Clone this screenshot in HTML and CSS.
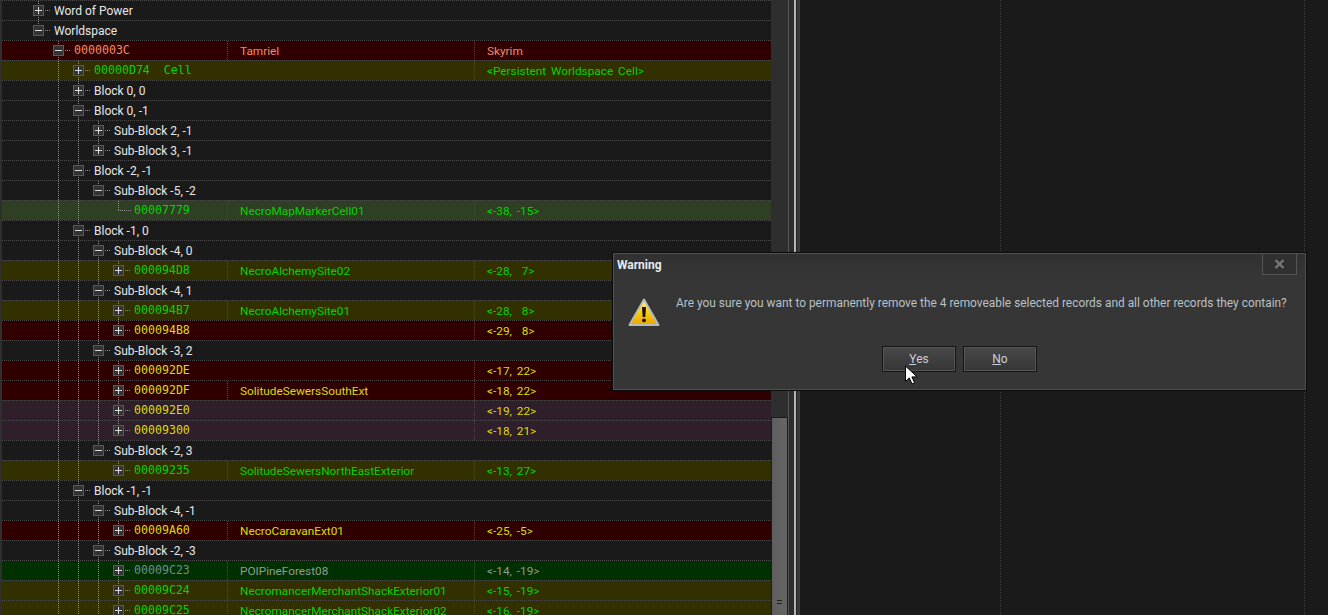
FILE: index.html
```html
<!DOCTYPE html>
<html lang="en">
<head>
  <meta charset="UTF-8">
  <title>Warning</title>
  <link rel="stylesheet" href="styles.css">
</head>
<body>
  <div class="tree">
    <div class="row"><div class="c1"><i class="g box"><b class="plus"></b></i>Word of Power</div></div>
    <div class="row"><div class="c1"><i class="g box end"><b class="minus"></b></i>Worldspace</div></div>

    <div class="row red salmon"><div class="c1"><i class="g off"></i><i class="g box"><b class="minus"></b></i><span class="id">0000003C</span></div><div class="c2">Tamriel</div><div class="c3">Skyrim</div></div>
    <div class="row olive green"><div class="c1 wide"><i class="g off"></i><i class="g"></i><i class="g box"><b class="plus"></b></i><span class="id">00000D74  Cell</span></div><div class="c3">&lt;Persistent Worldspace Cell&gt;</div></div>
    <div class="row"><div class="c1"><i class="g off"></i><i class="g"></i><i class="g box"><b class="plus"></b></i>Block 0, 0</div></div>
    <div class="row"><div class="c1"><i class="g off"></i><i class="g"></i><i class="g box"><b class="minus"></b></i>Block 0, -1</div></div>
    <div class="row"><div class="c1"><i class="g off"></i><i class="g"></i><i class="g"></i><i class="g box"><b class="plus"></b></i>Sub-Block 2, -1</div></div>
    <div class="row"><div class="c1"><i class="g off"></i><i class="g"></i><i class="g"></i><i class="g box end"><b class="plus"></b></i>Sub-Block 3, -1</div></div>
    <div class="row"><div class="c1"><i class="g off"></i><i class="g"></i><i class="g box"><b class="minus"></b></i>Block -2, -1</div></div>
    <div class="row"><div class="c1"><i class="g off"></i><i class="g"></i><i class="g"></i><i class="g box end"><b class="minus"></b></i>Sub-Block -5, -2</div></div>
    <div class="row sage green"><div class="c1"><i class="g off"></i><i class="g"></i><i class="g"></i><i class="g off"></i><i class="g leaf end"></i><span class="id">00007779</span></div><div class="c2">NecroMapMarkerCell01</div><div class="c3">&lt;-38, -15&gt;</div></div>
    <div class="row"><div class="c1"><i class="g off"></i><i class="g"></i><i class="g box"><b class="minus"></b></i>Block -1, 0</div></div>

    <div class="row"><div class="c1"><i class="g off"></i><i class="g"></i><i class="g"></i><i class="g box"><b class="minus"></b></i>Sub-Block -4, 0</div></div>
    <div class="row olive green"><div class="c1"><i class="g off"></i><i class="g"></i><i class="g"></i><i class="g"></i><i class="g box end"><b class="plus"></b></i><span class="id">000094D8</span></div><div class="c2">NecroAlchemySite02</div><div class="c3">&lt;-28,  7&gt;</div></div>
    <div class="row"><div class="c1"><i class="g off"></i><i class="g"></i><i class="g"></i><i class="g box"><b class="minus"></b></i>Sub-Block -4, 1</div></div>
    <div class="row olive green"><div class="c1"><i class="g off"></i><i class="g"></i><i class="g"></i><i class="g"></i><i class="g box"><b class="plus"></b></i><span class="id">000094B7</span></div><div class="c2">NecroAlchemySite01</div><div class="c3">&lt;-28,  8&gt;</div></div>
    <div class="row red yellow"><div class="c1 wide"><i class="g off"></i><i class="g"></i><i class="g"></i><i class="g"></i><i class="g box end"><b class="plus"></b></i><span class="id">000094B8</span></div><div class="c3">&lt;-29,  8&gt;</div></div>
    <div class="row"><div class="c1"><i class="g off"></i><i class="g"></i><i class="g"></i><i class="g box"><b class="minus"></b></i>Sub-Block -3, 2</div></div>
    <div class="row red yellow"><div class="c1 wide"><i class="g off"></i><i class="g"></i><i class="g"></i><i class="g"></i><i class="g box"><b class="plus"></b></i><span class="id">000092DE</span></div><div class="c3">&lt;-17, 22&gt;</div></div>
    <div class="row red yellow"><div class="c1"><i class="g off"></i><i class="g"></i><i class="g"></i><i class="g"></i><i class="g box"><b class="plus"></b></i><span class="id">000092DF</span></div><div class="c2">SolitudeSewersSouthExt</div><div class="c3">&lt;-18, 22&gt;</div></div>
    <div class="row plum yellow"><div class="c1 wide"><i class="g off"></i><i class="g"></i><i class="g"></i><i class="g"></i><i class="g box"><b class="plus"></b></i><span class="id">000092E0</span></div><div class="c3">&lt;-19, 22&gt;</div></div>
    <div class="row plum yellow"><div class="c1 wide"><i class="g off"></i><i class="g"></i><i class="g"></i><i class="g"></i><i class="g box end"><b class="plus"></b></i><span class="id">00009300</span></div><div class="c3">&lt;-18, 21&gt;</div></div>
    <div class="row"><div class="c1"><i class="g off"></i><i class="g"></i><i class="g"></i><i class="g box end"><b class="minus"></b></i>Sub-Block -2, 3</div></div>
    <div class="row olive green"><div class="c1"><i class="g off"></i><i class="g"></i><i class="g"></i><i class="g off"></i><i class="g box end"><b class="plus"></b></i><span class="id">00009235</span></div><div class="c2">SolitudeSewersNorthEastExterior</div><div class="c3">&lt;-13, 27&gt;</div></div>

    <div class="row"><div class="c1"><i class="g off"></i><i class="g"></i><i class="g box"><b class="minus"></b></i>Block -1, -1</div></div>
    <div class="row"><div class="c1"><i class="g off"></i><i class="g"></i><i class="g"></i><i class="g box"><b class="minus"></b></i>Sub-Block -4, -1</div></div>
    <div class="row red yellow"><div class="c1"><i class="g off"></i><i class="g"></i><i class="g"></i><i class="g"></i><i class="g box end"><b class="plus"></b></i><span class="id">00009A60</span></div><div class="c2">NecroCaravanExt01</div><div class="c3">&lt;-25, -5&gt;</div></div>
    <div class="row"><div class="c1"><i class="g off"></i><i class="g"></i><i class="g"></i><i class="g box"><b class="minus"></b></i>Sub-Block -2, -3</div></div>
    <div class="row forest grey"><div class="c1"><i class="g off"></i><i class="g"></i><i class="g"></i><i class="g"></i><i class="g box"><b class="plus"></b></i><span class="id">00009C23</span></div><div class="c2">POIPineForest08</div><div class="c3">&lt;-14, -19&gt;</div></div>
    <div class="row olive green"><div class="c1"><i class="g off"></i><i class="g"></i><i class="g"></i><i class="g"></i><i class="g box"><b class="plus"></b></i><span class="id">00009C24</span></div><div class="c2">NecromancerMerchantShackExterior01</div><div class="c3">&lt;-15, -19&gt;</div></div>
    <div class="row olive green"><div class="c1"><i class="g off"></i><i class="g"></i><i class="g"></i><i class="g"></i><i class="g box"><b class="plus"></b></i><span class="id">00009C25</span></div><div class="c2">NecromancerMerchantShackExterior02</div><div class="c3">&lt;-16, -19&gt;</div></div>
  </div>

  <div class="scrollbar">
    <div class="thumb"><span class="grip"></span></div>
  </div>
  <div class="splitter"></div>

  <div class="side">
    <div class="side-col first"></div>
    <div class="side-col second"></div>
  </div>

  <!-- modal on top of everything -->
  <div class="dialog">
    <div class="dialog-title">
      <span>Warning</span>
      <button class="close" aria-label="Close">
        <svg width="11" height="10" viewBox="0 0 11 10"><path d="M1.5 1l8 8M9.5 1l-8 8" stroke="#777" stroke-width="2.4" fill="none"/></svg>
      </button>
    </div>
    <div class="dialog-body">
      <svg class="warn-icon" width="32" height="29" viewBox="0 0 32 29">
        <defs>
          <linearGradient id="warnFill" x1="0" y1="0" x2="0" y2="1">
            <stop offset="0" stop-color="#fff3a0"/>
            <stop offset="0.45" stop-color="#fbd20c"/>
            <stop offset="1" stop-color="#e9a400"/>
          </linearGradient>
        </defs>
        <path d="M16 1.5L30.5 27H1.5z" fill="url(#warnFill)" stroke="#b9b9b9" stroke-width="2" stroke-linejoin="round"/>
        <path d="M14 9h4l-.7 10h-2.6z" fill="#111"/>
        <circle cx="16" cy="22.3" r="1.9" fill="#111"/>
      </svg>
      <p class="message">Are you sure you want to permanently remove the 4 removeable selected records and all other records they contain?</p>
    </div>
    <div class="dialog-buttons">
      <button class="btn"><u>Y</u>es</button>
      <button class="btn"><u>N</u>o</button>
    </div>
  </div>

  <svg class="cursor" width="15" height="20" viewBox="0 0 15 20">
    <path d="M1.5 1v15.5l3.8-3.6 2.7 6 2.6-1.2-2.7-5.8h5.2z" fill="#fff" stroke="#000" stroke-width="1"/>
  </svg>
</body>
</html>
```

FILE: styles.css
```css
* {
  box-sizing: border-box;
}
body {
  margin: 0;
  height: 100vh;
  overflow: hidden;
  display: flex;
  background-color: #1a1a1a;
  color: #e6e6e6;
  font-family: Roboto, sans-serif;
  font-size: 12px;
}

/* tree */
.tree {
  width: 771px;
  flex: none;
  border-left: 2px solid #2f2f2f;
}
.row {
  display: flex;
  height: 20px;
  border-top: 1px dotted #4a4a4a;
  line-height: 21px;
  white-space: pre;
}
.c1 {
  display: flex;
  flex: 1;
  padding-left: 31px;
}
.c1:not(:last-child) {
  flex: none;
  width: 225px;
}
.c1.wide:not(:last-child) {
  width: 472px;
}
.c2 {
  flex: none;
  width: 247px;
  padding-left: 12px;
  border-left: 1px dotted #4a4a4a;
  font-size: 11.8px;
}
.c3 {
  flex: 1;
  padding-left: 12px;
  border-left: 1px dotted #4a4a4a;
  font-size: 11.8px;
  word-spacing: 2px;
}
.id {
  font-family: 'DejaVu Sans Mono', monospace;
  font-size: 11.6px;
  line-height: 19px;
}

/* row colours */
.red { background-color: #300000; }
.olive { background-color: #333000; }
.sage { background-color: #2f3f23; }
.plum { background-color: #2f1f2a; }
.forest { background-color: #003000; }
.salmon { color: #f58a62; }
.green { color: #00d400; }
.yellow { color: #dcdc00; }
.grey { color: #8d9c92; }
.forest .id { color: #6b8f8f; }

/* tree guides, one cell per level */
.g {
  --dots: repeating-linear-gradient(to bottom, #8e8e8e 0 1px, transparent 1px 2px);
  --dash: repeating-linear-gradient(to right, #8e8e8e 0 1px, transparent 1px 2px);
  --len: 100%;
  flex: none;
  width: 20px;
  display: flex;
  align-items: center;
  background: var(--dots) 5px 0 / 1px var(--len) no-repeat;
}
.g.end {
  --len: 50%;
}
.g.off {
  background: none;
}
.g.box {
  width: 21px;
  background: var(--dash) 12px 50% / 6px 1px no-repeat, var(--dots) 5px 0 / 1px var(--len) no-repeat;
}
.g.leaf {
  width: 21px;
  background: var(--dash) 5px 50% / 14px 1px no-repeat, var(--dots) 5px 0 / 1px var(--len) no-repeat;
}
.plus, .minus {
  width: 11px;
  height: 11px;
  border: 1px solid #5a5a5a;
  background-color: #333;
}
.minus {
  background: linear-gradient(#ddd, #ddd) center / 7px 1px no-repeat, #333;
}
.plus {
  background: linear-gradient(#ddd, #ddd) center / 7px 1px no-repeat, linear-gradient(#ddd, #ddd) center / 1px 7px no-repeat, #333;
}

/* scrollbar and splitter */
.scrollbar {
  width: 17px;
  flex: none;
  padding-top: 417px;
  background-color: #2e2e2e;
}
.thumb {
  height: 220px;
  padding-top: 182px;
  display: flex;
  justify-content: center;
  border: 1px solid #1c1c1c;
  background: linear-gradient(to right, #5e5e5e, #666);
}
.grip {
  width: 5px;
  height: 4px;
  border-top: 1px solid #222;
  border-bottom: 1px solid #222;
}
.splitter {
  width: 12px;
  flex: none;
  background: linear-gradient(to right, #555 0 1px, #2d2d2d 1px 6px, #b5b5b5 6px 8px, #222 8px 9px, #3a3a3a 9px);
}

/* right pane */
.side {
  flex: 1;
  display: flex;
}
.side-col {
  border-right: 1px dotted #3c3c3c;
}
.first {
  width: 201px;
}
.second {
  width: 304px;
}

/* dialog */
.dialog {
  position: absolute;
  left: 612px;
  top: 252px;
  width: 695px;
  height: 139px;
  border: 1px solid #0c0c0c;
  outline: 1px solid #505050;
  outline-offset: -2px;
  background: linear-gradient(#303030, #363636 24px);
  padding: 1px 1px;
}
.dialog-title {
  display: flex;
  justify-content: space-between;
  padding-left: 3px;
  height: 21px;
  line-height: 22px;
  font-weight: 700;
  color: #e4ebf2;
}
.close {
  width: 35px;
  height: 21px;
  margin-right: 8px;
  padding: 0;
  display: flex;
  align-items: center;
  justify-content: center;
  border: 1px solid #555;
  border-top: none;
  background: #303030;
}
.dialog-body {
  display: flex;
  align-items: flex-start;
  padding: 20px 0 0 14px;
}
.warn-icon {
  flex: none;
  margin-top: 3px;
}
.message {
  margin: 0 0 0 16px;
  color: #b9c0c6;
  white-space: nowrap;
  line-height: 16px;
  font-size: 11.92px;
}
.dialog-buttons {
  display: flex;
  justify-content: center;
  gap: 7px;
  margin-top: 19px;
}
.btn {
  width: 74px;
  height: 26px;
  padding: 0;
  border: 1px solid #151515;
  box-shadow: inset 0 0 0 1px #555;
  background: linear-gradient(#484848, #363636);
  color: #c9ced3;
  font-family: Roboto, sans-serif;
  font-size: 12px;
}

.cursor {
  position: absolute;
  left: 904px;
  top: 365px;
}
```
